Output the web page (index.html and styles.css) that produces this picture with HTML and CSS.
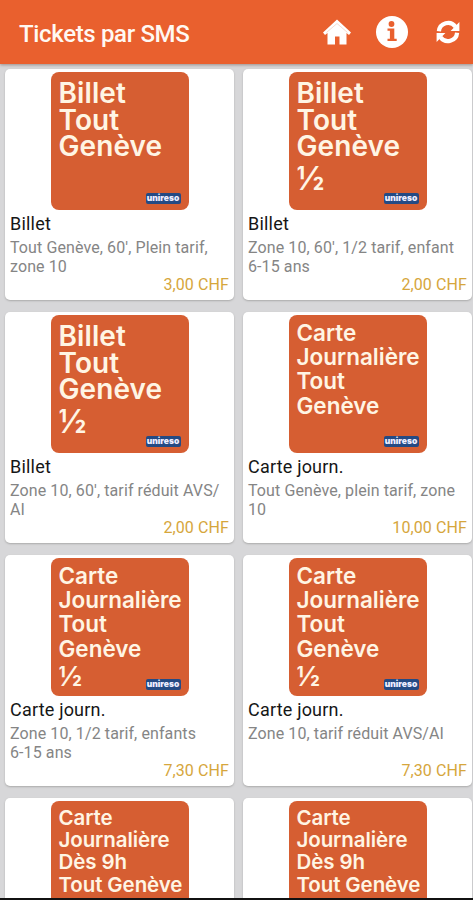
FILE: index.html
```html
<!DOCTYPE html>
<html lang="fr">
<head>
<meta charset="utf-8">
<title>Tickets par SMS</title>
<link rel="stylesheet" href="styles.css">
</head>
<body>
<div class="screen">
  <header class="bar">
    <h1>Tickets par SMS</h1>
    <nav class="actions">
      <svg class="home" viewBox="0 0 28 26"><path d="M14 0.5 L28 13.5 L26 16 L23.5 14 V25.5 H16.5 V17.5 H12 V25.5 H4.5 V14 L2 16 L0 13.5 Z" fill="#fff"/><path d="M3.5 13.5 L14 4.5 L24.5 13.5" fill="none" stroke="#f6dcd2" stroke-width="1"/></svg>
      <svg class="info" viewBox="0 0 32 32"><circle cx="16" cy="16" r="16" fill="#fff"/><circle cx="15.5" cy="8" r="2.9" fill="#e9602e"/><path d="M11.5 12.5 H18.3 V22.8 H20.7 V25 H11.5 V22.8 H13.9 V14.7 H11.5 Z" fill="#e9602e"/></svg>
      <svg class="sync" viewBox="0 0 24 24"><g fill="none" stroke="#fff" stroke-width="4.2"><path d="M2.9 11.3 A9.2 9.2 0 0 1 19.5 6.7"/><path d="M21.1 12.7 A9.2 9.2 0 0 1 4.5 17.3"/></g><path d="M23.4 2 V11 H14.6 Z M.6 22 V13 H9.4 Z" fill="#fff"/></svg>
    </nav>
  </header>
  <main class="grid">
    <article class="card">
      <div class="tile large"><span>Billet</span><span>Tout</span><span>Genève</span><b class="brand">unireso</b></div>
      <h2>Billet</h2><p>Tout Genève, 60', Plein tarif, zone 10</p><div class="price">3,00 CHF</div>
    </article>
    <article class="card">
      <div class="tile large"><span>Billet</span><span>Tout</span><span>Genève</span><span class="half">½</span><b class="brand">unireso</b></div>
      <h2>Billet</h2><p>Zone 10, 60', 1/2 tarif, enfant<br>6-15 ans</p><div class="price">2,00 CHF</div>
    </article>
    <article class="card">
      <div class="tile large"><span>Billet</span><span>Tout</span><span>Genève</span><span class="half">½</span><b class="brand">unireso</b></div>
      <h2>Billet</h2><p>Zone 10, 60', tarif réduit AVS/<br>AI</p><div class="price">2,00 CHF</div>
    </article>
    <article class="card">
      <div class="tile medium"><span>Carte</span><span>Journalière</span><span>Tout</span><span>Genève</span><b class="brand">unireso</b></div>
      <h2>Carte journ.</h2><p>Tout Genève, plein tarif, zone<br>10</p><div class="price">10,00 CHF</div>
    </article>
    <article class="card">
      <div class="tile medium"><span>Carte</span><span>Journalière</span><span>Tout</span><span>Genève</span><span class="half">½</span><b class="brand">unireso</b></div>
      <h2>Carte journ.</h2><p>Zone 10, 1/2 tarif, enfants<br>6-15 ans</p><div class="price">7,30 CHF</div>
    </article>
    <article class="card">
      <div class="tile medium"><span>Carte</span><span>Journalière</span><span>Tout</span><span>Genève</span><span class="half">½</span><b class="brand">unireso</b></div>
      <h2>Carte journ.</h2><p>Zone 10, tarif réduit AVS/AI</p><div class="price">7,30 CHF</div>
    </article>
    <article class="card">
      <div class="tile small"><span>Carte</span><span>Journalière</span><span>Dès 9h</span><span>Tout Genève</span></div>
    </article>
    <article class="card">
      <div class="tile small"><span>Carte</span><span>Journalière</span><span>Dès 9h</span><span>Tout Genève</span></div>
    </article>
  </main>
</div>
</body>
</html>
```
FILE: styles.css
```css
* { box-sizing: border-box; margin: 0; }
body { width: 473px; height: 900px; overflow: hidden; font-family: Roboto, sans-serif; background: #d7d7d9; }
.screen { height: 900px; overflow: hidden; display: flex; flex-direction: column; border-bottom: 2px solid #111; }
.bar { flex: none; height: 64px; padding: 0 13px 0 19px; display: flex; align-items: center; justify-content: space-between; background: #e9602e; box-shadow: 0 1px 3px #9c8d88; }
h1 { padding-top: 3px; font-size: 24px; font-weight: 500; letter-spacing: -.35px; color: #fff8f2; white-space: nowrap; }
.actions { display: flex; align-items: center; }
.actions svg { display: block; }
.home { width: 28px; height: 26px; margin-right: 25px; }
.info { width: 32px; height: 32px; margin-right: 28px; }
.sync { width: 24px; height: 24px; }
.grid { flex: none; display: grid; grid-template-columns: 229px 229px; grid-auto-rows: 231px; gap: 12px 9px; padding: 5px 1px 0 5px; }
.card { display: flex; flex-direction: column; background: #fff; border-radius: 5px; padding: 3px 5px 0; box-shadow: 0 1px 2px #aaa; }
.tile { position: relative; flex: none; margin-left: 40.5px; width: 138px; height: 138px; border-radius: 8px; background: #d65e32; color: #fff5e4; padding-left: 8px; display: flex; flex-direction: column; font-family: Inter, sans-serif; font-weight: 600; white-space: nowrap; }
.large { padding-top: 8px; font-size: 28px; line-height: 26.5px; letter-spacing: .1px; }
.large .half { margin-top: 6px; font-size: 32px; }
.medium { padding-top: 6px; font-size: 22.5px; line-height: 24.2px; }
.medium .half { margin-top: 4px; font-size: 27px; }
.small { padding-top: 6px; font-size: 20.5px; line-height: 22.2px; letter-spacing: -.1px; }
.brand { position: absolute; right: 8px; bottom: 6px; width: 35px; height: 11px; border-radius: 2px; background: #244a84; color: #eef; font: 900 8.5px/10px Inter, sans-serif; letter-spacing: 0; text-align: center; }
h2 { font-size: 18px; font-weight: 400; line-height: 22px; margin-top: 3px; color: #161616; letter-spacing: .2px; }
p { font-size: 16px; line-height: 19px; margin-top: 3px; height: 38px; color: #858585; letter-spacing: .1px; }
.price { font-size: 16px; line-height: 18px; text-align: right; color: #d6a63c; letter-spacing: .1px; }
```
